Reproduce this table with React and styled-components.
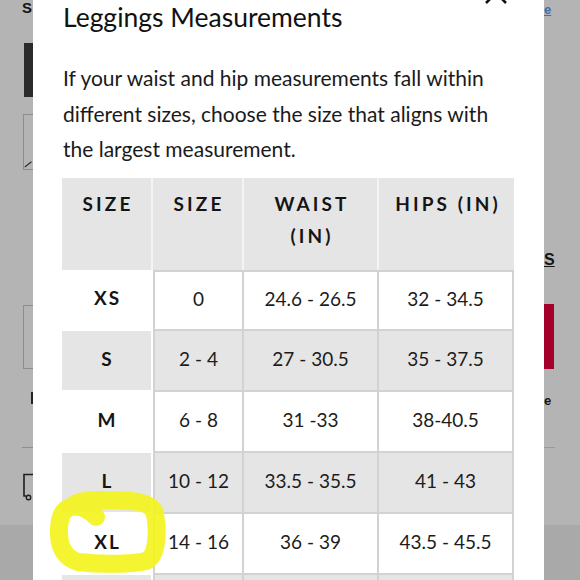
import styled, { createGlobalStyle } from 'styled-components';

const GlobalStyle = createGlobalStyle`
  *, *::before, *::after { box-sizing: border-box; }
  html, body { margin: 0; padding: 0; }
  body {
    background: #b4b4b4;
    font-family: 'Lato', 'Liberation Sans', sans-serif;
    color: #151515;
  }
`;

const FONT = `'Lato', 'Liberation Sans', sans-serif`;

const Page = styled.div`
  display: grid;
  grid-template-columns: 33px 511px 1fr;
  width: 580px;
  height: 580px;
  overflow: hidden;
  background: #b4b4b4;
`;

// page behind the overlay, only slivers of it show
const Rail = styled.div`
  display: flex;
  flex-direction: column;
  min-height: 0;
  overflow: hidden;
`;

const Footer = styled.div`
  margin-top: auto;
  flex-shrink: 0;
  height: 55px;
  background: #a9a9a9;
`;

const RailText = styled.span`
  display: block;
  flex-shrink: 0;
  margin: ${(p) => p.$top}px 0 0 ${(p) => p.$left}px;
  font: 700 ${(p) => p.$size}px/16px 'Liberation Sans', sans-serif;
  color: ${(p) => p.$color || '#141414'};
  text-decoration: ${(p) => (p.$underline ? 'underline' : 'none')};
  white-space: nowrap;
`;

const Block = styled.div`
  flex-shrink: 0;
  margin: ${(p) => p.$top}px 0 0 ${(p) => p.$left}px;
  width: ${(p) => p.$width || 'auto'};
  height: ${(p) => p.$height}px;
  background: ${(p) => p.$color};
`;

const OutlineBox = styled.div`
  flex-shrink: 0;
  display: flex;
  align-items: flex-end;
  margin: ${(p) => p.$top}px 0 0 23px;
  height: ${(p) => p.$height}px;
  border: 1px solid #8d8d8d;
  border-right: none;
`;

const RailIcon = styled.svg`
  flex-shrink: 0;
  display: block;
  margin: 25px 0 0 22px;
`;

const Modal = styled.section`
  display: flex;
  flex-direction: column;
  min-height: 0;
  overflow: hidden;
  background: #fff;
  padding: 1px 30px 0 29px;
`;

const Header = styled.header`
  display: flex;
  justify-content: space-between;
  align-items: flex-start;
`;

const Title = styled.h2`
  margin: 0 0 0 1px;
  font: 400 26.5px/32px ${FONT};
  color: #111;
`;

const CloseButton = styled.button`
  display: flex;
  margin: -20px 6px 0 0;
  padding: 0;
  border: 0;
  background: none;
  color: #111;
`;

const Intro = styled.p`
  margin: 27px 0 11.5px 1px;
  font: 400 21px/35.5px ${FONT};
  color: #1a1a1a;
`;

const Chart = styled.div`
  display: grid;
  flex-shrink: 0;
  grid-template-columns: 91px 91px 135px 135px;
  grid-template-rows: 92px;
  grid-auto-rows: 61px;
`;

const HeadCell = styled.div`
  padding: 10px 0 0 3px;
  background: #e5e5e5;
  border-right: ${(p) => (p.$last ? 'none' : '2px solid #f4f4f4')};
  text-align: center;
  font: 700 19px/32px ${FONT};
  letter-spacing: 3.1px;
  color: #151515;
`;

const LabelCell = styled.div`
  position: relative;
  display: flex;
  align-items: center;
  justify-content: center;
  padding: 0 0 3px 2px;
  background: ${(p) => (p.$shaded ? '#e5e5e5' : '#fff')};
  border-right: 2px solid #fff;
  border-bottom: 2px solid #fff;
  font: 700 19px/1.2 ${FONT};
  letter-spacing: 2px;
  color: #151515;
`;

const ValueCell = styled.div`
  display: flex;
  align-items: center;
  justify-content: center;
  padding-bottom: 3px;
  background: ${(p) => (p.$shaded ? '#e5e5e5' : '#fff')};
  border-right: 2px solid #d2d2d2;
  border-bottom: 2px solid #d2d2d2;
  border-left: ${(p) => (p.$first ? '2px solid #d2d2d2' : 'none')};
  border-top: ${(p) => (p.$topRow ? '2px solid #d2d2d2' : 'none')};
  font: 400 19px/1.2 ${FONT};
  color: #1c1c1c;
  white-space: nowrap;
`;

const Highlight = styled.svg`
  position: absolute;
  left: -14px;
  top: -24px;
  z-index: 1;
  pointer-events: none;
`;

const ROWS = [
  ['XS', '0', '24.6 - 26.5', '32 - 34.5'],
  ['S', '2 - 4', '27 - 30.5', '35 - 37.5'],
  ['M', '6 - 8', '31 -33', '38-40.5'],
  ['L', '10 - 12', '33.5 - 35.5', '41 - 43'],
  ['XL', '14 - 16', '36 - 39', '43.5 - 45.5'],
];

const Marker = () => (
  <Highlight width="120" height="90" viewBox="0 0 120 90">
    <path
      d="M48 27 C36 14 16 11 12 30 C9 48 11 66 30 72 C55 75 85 74 98 71 C110 66 110 40 107 24 C104 10 80 10 50 10 C36 10 28 12 24 17"
      fill="none"
      stroke="#f4f31e"
      strokeOpacity="0.92"
      strokeWidth="18"
      strokeLinecap="round"
      strokeLinejoin="round"
    />
  </Highlight>
);

const App = () => {
  return (
    <>
      <GlobalStyle />
      <Page>
        <Rail>
          <RailText $top={0} $left={22} $size={15}>S</RailText>
          <Block $top={27} $left={24} $height={54} $color="#2b2b2b" />
          <OutlineBox $top={17} $height={56}>
            <svg width="12" height="10" viewBox="0 0 12 10">
              <path d="M1 9 L10 2" stroke="#2b2b2b" strokeWidth="1.5" />
            </svg>
          </OutlineBox>
          <OutlineBox $top={135} $height={64} />
          <Block $top={23} $left={31} $width="2px" $height={12} $color="#222" />
          <Block $top={43} $left={22} $height={1} $color="#8f8f8f" />
          <RailIcon width="12" height="28" viewBox="0 0 12 28">
            <path d="M12 1.5 H2 V23 H4" fill="none" stroke="#1e1e1e" strokeWidth="1.6" />
            <circle cx="6.5" cy="24.5" r="2.2" fill="none" stroke="#1e1e1e" strokeWidth="1.4" />
          </RailIcon>
          <Footer />
        </Rail>

        <Modal>
          <Header>
            <Title>Leggings Measurements</Title>
            <CloseButton aria-label="Close">
              <svg width="24" height="24" viewBox="0 0 24 24">
                <path d="M2 2 L22 22 M22 2 L2 22" stroke="currentColor" strokeWidth="2.6" />
              </svg>
            </CloseButton>
          </Header>
          <Intro>
            If your waist and hip measurements fall within
            <br />
            different sizes, choose the size that aligns with
            <br />
            the largest measurement.
          </Intro>
          <Chart>
            <HeadCell>SIZE</HeadCell>
            <HeadCell>SIZE</HeadCell>
            <HeadCell>
              WAIST
              <br />
              (IN)
            </HeadCell>
            <HeadCell $last>HIPS (IN)</HeadCell>
            {ROWS.map(([label, size, waist, hips], i) => {
              const shaded = i % 2 === 1;
              return [
                <LabelCell key={`${label}-l`} $shaded={shaded}>
                  {label}
                  {label === 'XL' && <Marker />}
                </LabelCell>,
                <ValueCell key={`${label}-s`} $shaded={shaded} $first $topRow={i === 0}>
                  {size}
                </ValueCell>,
                <ValueCell key={`${label}-w`} $shaded={shaded} $topRow={i === 0}>
                  {waist}
                </ValueCell>,
                <ValueCell key={`${label}-h`} $shaded={shaded} $topRow={i === 0}>
                  {hips}
                </ValueCell>,
              ];
            })}
            {/* next row starts right at the bottom edge */}
            <LabelCell $shaded />
            <ValueCell $shaded $first />
            <ValueCell $shaded />
            <ValueCell $shaded />
          </Chart>
        </Modal>

        <Rail>
          <RailText $top={2} $left={0} $size={13} $color="#3d6fb0" $underline>
            e
          </RailText>
          <RailText $top={234} $left={0} $size={16} $underline>
            S
          </RailText>
          <Block $top={36} $left={0} $width="10px" $height={65} $color="#a4002b" />
          <RailText $top={24} $left={0} $size={13}>
            e
          </RailText>
          <Block $top={38} $left={0} $width="11px" $height={1} $color="#999" />
          <Footer />
        </Rail>
      </Page>
    </>
  );
};

export default App;
